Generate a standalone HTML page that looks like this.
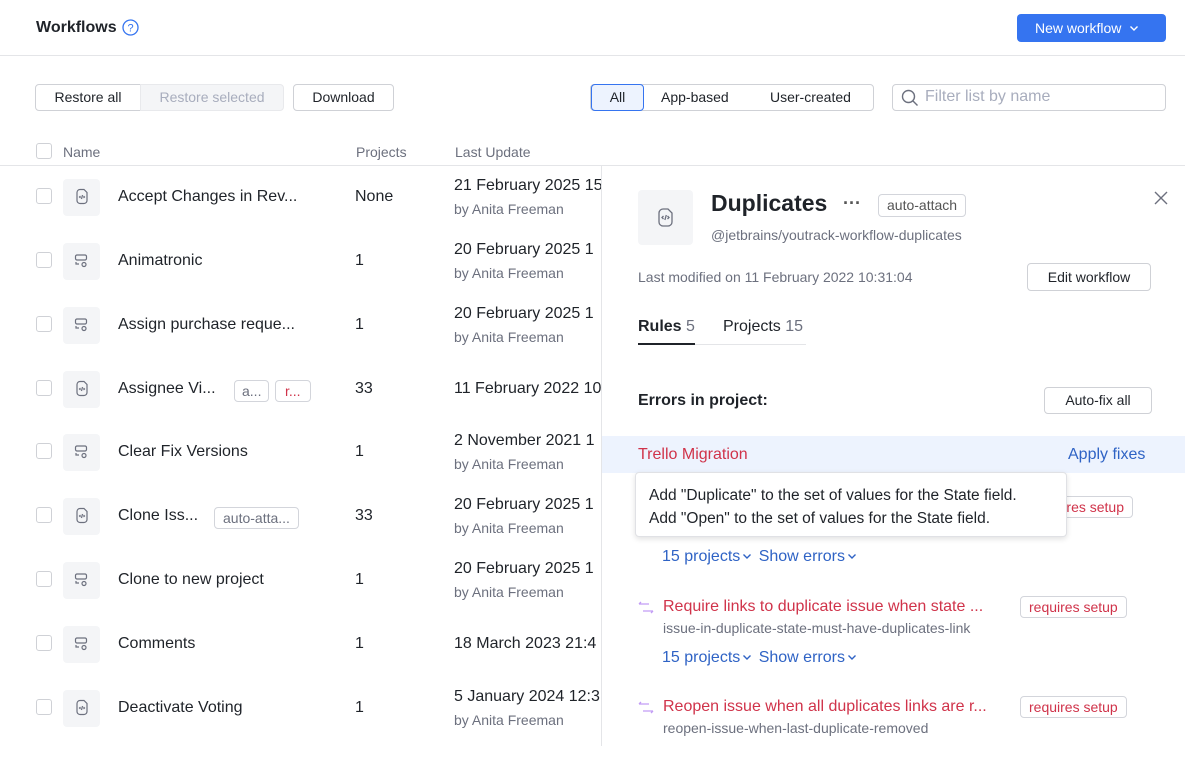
<!DOCTYPE html>
<html><head><style>
*{box-sizing:border-box;margin:0;padding:0}
body{width:1185px;height:746px;overflow:hidden;background:#fff;font-family:"Liberation Sans",sans-serif;color:#1f2329;position:relative;font-size:14px}
.a{position:absolute;white-space:nowrap}
.btn{position:absolute;border:1px solid #cfd1d6;border-radius:4px;background:#fff;font-size:14px;text-align:center;color:#1f2329}
.cb{position:absolute;width:16px;height:16px;border:1px solid #cfd1d6;border-radius:3px;left:36px}
.ic{position:absolute;left:63px;width:37px;height:37px;background:#f4f5f7;border-radius:4px}
.nm{position:absolute;left:118px;font-size:16px}
.pj{position:absolute;left:355px;font-size:16px}
.dt{position:absolute;left:454px;font-size:16px}
.by{position:absolute;left:454px;font-size:14px;color:#6c707e}
.tag{position:absolute;border:1px solid #d3d5db;border-radius:4px;font-size:14px;color:#6c707e;height:22px;line-height:20px;padding:0 8px}
.red{color:#d0334a}
.blue{color:#2f63c5}
.chev{display:inline-block;width:10px;height:8px;margin:0 2px 2px 2px;vertical-align:middle}
</style></head><body>
<div class="a" style="left:36px;top:19px;font-size:16px;font-weight:bold">Workflows</div>
<svg class="a" style="left:122px;top:19px" width="17" height="17" viewBox="0 0 17 17"><circle cx="8.5" cy="8.5" r="7.5" fill="none" stroke="#3574f0" stroke-width="1.3"/><text x="8.5" y="12.5" font-size="11" text-anchor="middle" fill="#3574f0" font-family="Liberation Sans">?</text></svg>
<div class="a" style="left:1017px;top:14px;width:149px;height:28px;background:#3574f0;border-radius:4px;color:#fff;font-size:14px;line-height:28px;padding-left:18px">New workflow <svg class="chev" viewBox="0 0 10 8" style="margin-left:4px"><path d="M1.5 2.5l3.5 3.5 3.5-3.5" fill="none" stroke="#fff" stroke-width="1.4"/></svg></div>
<div class="a" style="left:0;top:55px;width:1185px;height:1px;background:#e4e5e8"></div>

<div class="btn" style="left:35px;top:84px;width:106px;height:27px;line-height:25px;border-radius:4px 0 0 4px">Restore all</div>
<div class="btn" style="left:140px;top:84px;width:144px;height:27px;line-height:25px;border-radius:0 4px 4px 0;background:#f4f5f7;color:#a8adbd;border-color:#e8e9ec">Restore selected</div>
<div class="btn" style="left:293px;top:84px;width:101px;height:27px;line-height:25px">Download</div>

<div class="btn" style="left:590px;top:84px;width:284px;height:27px"></div>
<div class="btn" style="left:591px;top:84px;width:53px;height:27px;line-height:25px;background:#edf3fe;border-color:#3574f0">All</div>
<div class="a" style="left:661px;top:89px">App-based</div>
<div class="a" style="left:770px;top:89px">User-created</div>
<div class="btn" style="left:892px;top:84px;width:274px;height:27px"></div>
<svg class="a" style="left:901px;top:89px" width="18" height="18" viewBox="0 0 18 18"><circle cx="7.5" cy="7.5" r="6" fill="none" stroke="#6c707e" stroke-width="1.4"/><path d="M12 12l4.5 4.5" stroke="#6c707e" stroke-width="1.4"/></svg>
<div class="a" style="left:925px;top:88px;font-size:16px;color:#a8adbd">Filter list by name</div>

<div class="cb" style="top:143px"></div>
<div class="a" style="left:63px;top:144px;color:#6c707e">Name</div>
<div class="a" style="left:356px;top:144px;color:#6c707e">Projects</div>
<div class="a" style="left:455px;top:144px;color:#6c707e">Last Update</div>
<div class="a" style="left:0;top:165px;width:1185px;height:1px;background:#e4e5e8"></div>

<div class="cb" style="top:188px"></div><div class="ic" style="top:179px"></div><div class="nm" style="top:188px">Accept Changes in Rev...</div><div class="pj" style="top:188px">None</div><div class="dt" style="top:177px">21 February 2025 15</div><div class="by" style="top:201px">by Anita Freeman</div>
<div class="cb" style="top:252px"></div><div class="ic" style="top:243px"></div><div class="nm" style="top:252px">Animatronic</div><div class="pj" style="top:252px">1</div><div class="dt" style="top:241px">20 February 2025 1</div><div class="by" style="top:265px">by Anita Freeman</div>
<div class="cb" style="top:316px"></div><div class="ic" style="top:307px"></div><div class="nm" style="top:316px">Assign purchase reque...</div><div class="pj" style="top:316px">1</div><div class="dt" style="top:305px">20 February 2025 1</div><div class="by" style="top:329px">by Anita Freeman</div>
<div class="cb" style="top:380px"></div><div class="ic" style="top:371px"></div><div class="nm" style="top:380px">Assignee Vi...</div><div class="tag" style="left:234px;top:380px;padding:0 7px">a...</div><div class="tag red" style="left:275px;top:380px;padding:0 9px;color:#d0334a">r...</div><div class="pj" style="top:380px">33</div><div class="dt" style="top:380px">11 February 2022 10</div>
<div class="cb" style="top:443px"></div><div class="ic" style="top:434px"></div><div class="nm" style="top:443px">Clear Fix Versions</div><div class="pj" style="top:443px">1</div><div class="dt" style="top:432px">2 November 2021 1</div><div class="by" style="top:456px">by Anita Freeman</div>
<div class="cb" style="top:507px"></div><div class="ic" style="top:498px"></div><div class="nm" style="top:507px">Clone Iss...</div><div class="tag" style="left:214px;top:507px">auto-atta...</div><div class="pj" style="top:507px">33</div><div class="dt" style="top:496px">20 February 2025 1</div><div class="by" style="top:520px">by Anita Freeman</div>
<div class="cb" style="top:571px"></div><div class="ic" style="top:562px"></div><div class="nm" style="top:571px">Clone to new project</div><div class="pj" style="top:571px">1</div><div class="dt" style="top:560px">20 February 2025 1</div><div class="by" style="top:584px">by Anita Freeman</div>
<div class="cb" style="top:635px"></div><div class="ic" style="top:626px"></div><div class="nm" style="top:635px">Comments</div><div class="pj" style="top:635px">1</div><div class="dt" style="top:635px">18 March 2023 21:4</div>
<div class="cb" style="top:699px"></div><div class="ic" style="top:690px"></div><div class="nm" style="top:699px">Deactivate Voting</div><div class="pj" style="top:699px">1</div><div class="dt" style="top:688px">5 January 2024 12:3</div><div class="by" style="top:712px">by Anita Freeman</div>

<svg class="a" style="left:63px;top:179px" width="37" height="600" viewBox="0 0 37 600">
<g fill="none" stroke="#6c707e" stroke-width="1.2">
<g><path d="M14 13.5a3 3 0 0 1 3-3h4l3 3v8a3 3 0 0 1-3 3h-4a3 3 0 0 1-3-3z"/><path d="M17.5 17l-1 1 1 1M20.5 17l1 1-1 1M19.5 16l-1 4"/></g>
<g transform="translate(0,192)"><path d="M14 13.5a3 3 0 0 1 3-3h4l3 3v8a3 3 0 0 1-3 3h-4a3 3 0 0 1-3-3z"/><path d="M17.5 17l-1 1 1 1M20.5 17l1 1-1 1M19.5 16l-1 4"/></g>
<g transform="translate(0,319)"><path d="M14 13.5a3 3 0 0 1 3-3h4l3 3v8a3 3 0 0 1-3 3h-4a3 3 0 0 1-3-3z"/><path d="M17.5 17l-1 1 1 1M20.5 17l1 1-1 1M19.5 16l-1 4"/></g>
<g transform="translate(0,511)"><path d="M14 13.5a3 3 0 0 1 3-3h4l3 3v8a3 3 0 0 1-3 3h-4a3 3 0 0 1-3-3z"/><path d="M17.5 17l-1 1 1 1M20.5 17l1 1-1 1M19.5 16l-1 4"/></g>
<g transform="translate(0,64)"><rect x="12.5" y="12" width="11" height="5" rx="1.5"/><path d="M13 19v2h3"/><circle cx="21" cy="21.5" r="2"/></g>
<g transform="translate(0,128)"><rect x="12.5" y="12" width="11" height="5" rx="1.5"/><path d="M13 19v2h3"/><circle cx="21" cy="21.5" r="2"/></g>
<g transform="translate(0,255)"><rect x="12.5" y="12" width="11" height="5" rx="1.5"/><path d="M13 19v2h3"/><circle cx="21" cy="21.5" r="2"/></g>
<g transform="translate(0,383)"><rect x="12.5" y="12" width="11" height="5" rx="1.5"/><path d="M13 19v2h3"/><circle cx="21" cy="21.5" r="2"/></g>
<g transform="translate(0,447)"><rect x="12.5" y="12" width="11" height="5" rx="1.5"/><path d="M13 19v2h3"/><circle cx="21" cy="21.5" r="2"/></g>
</g></svg>

<div class="a" style="left:601px;top:166px;width:584px;height:580px;background:#fff;border-left:1px solid #e4e5e8"></div>
<div class="a" style="left:638px;top:190px;width:55px;height:55px;background:#f4f5f7;border-radius:4px"></div>
<svg class="a" style="left:638px;top:190px" width="55" height="55" viewBox="0 0 55 55"><g fill="none" stroke="#6c707e" stroke-width="1.3"><path d="M21 23a4 4 0 0 1 4-4h5l4 4v9a4 4 0 0 1-4 4h-5a4 4 0 0 1-4-4z"/><path d="M25.5 26l-1.5 1.5 1.5 1.5M29.5 26l1.5 1.5-1.5 1.5M28.3 25l-1.4 5"/></g></svg>
<div class="a" style="left:711px;top:190px;font-size:23px;font-weight:bold">Duplicates</div>
<div class="a" style="left:843px;top:193px;font-size:18px;font-weight:bold;color:#555">···</div>
<div class="tag" style="left:878px;top:194px;height:23px;line-height:21px;color:#555">auto-attach</div>
<div class="a" style="left:711px;top:227px;color:#6c707e">@jetbrains/youtrack-workflow-duplicates</div>
<svg class="a" style="left:1153px;top:190px" width="16" height="16"><path d="M2 2l12 12M14 2L2 14" stroke="#6c707e" stroke-width="1.4"/></svg>
<div class="a" style="left:638px;top:269px;color:#6c707e">Last modified on 11 February 2022 10:31:04</div>
<div class="btn" style="left:1027px;top:263px;width:124px;height:28px;line-height:26px">Edit workflow</div>
<div class="a" style="left:638px;top:318px;font-size:16px"><b style="font-weight:600">Rules</b> <span style="color:#6c707e">5</span></div>
<div class="a" style="left:723px;top:318px;font-size:16px">Projects <span style="color:#6c707e">15</span></div>
<div class="a" style="left:638px;top:344px;width:168px;height:1px;background:#e4e5e8"></div>
<div class="a" style="left:638px;top:343px;width:57px;height:2px;background:#1f2329"></div>
<div class="a" style="left:638px;top:392px;font-size:16px;font-weight:bold">Errors in project:</div>
<div class="btn" style="left:1044px;top:387px;width:108px;height:27px;line-height:25px">Auto-fix all</div>
<div class="a" style="left:602px;top:436px;width:583px;height:37px;background:#edf3fe"></div>
<div class="a red" style="left:638px;top:446px;font-size:16px">Trello Migration</div>
<div class="a blue" style="left:1068px;top:446px;font-size:16px">Apply fixes</div>
<div class="tag red" style="left:1016px;top:496px;width:117px;color:#d0334a;font-size:14px;text-align:right">requires setup</div>
<div class="a" style="left:635px;top:472px;width:432px;height:65px;background:#fff;border:1px solid #e0e1e5;border-radius:4px;box-shadow:0 2px 6px rgba(0,0,0,.12);padding:11px 0 0 13px;font-size:15.5px;line-height:23px">Add "Duplicate" to the set of values for the State field.<br>Add "Open" to the set of values for the State field.</div>
<div class="a blue" style="left:662px;top:548px;font-size:16px">15 projects<svg class="chev" viewBox="0 0 10 8"><path d="M1.5 2.5l3.5 3.5 3.5-3.5" fill="none" stroke="#2f63c5" stroke-width="1.4"/></svg> Show errors<svg class="chev" viewBox="0 0 10 8"><path d="M1.5 2.5l3.5 3.5 3.5-3.5" fill="none" stroke="#2f63c5" stroke-width="1.4"/></svg></div>

<svg class="a" style="left:637px;top:600px" width="18" height="16"><g fill="none" stroke="#c29cf5" stroke-width="1.3"><path d="M2 4h10M2 4l2-2M16 11H6M16 11l-2 2"/></g></svg>
<div class="a red" style="left:663px;top:598px;font-size:16px">Require links to duplicate issue when state ...</div>
<div class="a" style="left:663px;top:620px;color:#6c707e">issue-in-duplicate-state-must-have-duplicates-link</div>
<div class="tag red" style="left:1020px;top:596px;color:#d0334a">requires setup</div>
<div class="a blue" style="left:662px;top:649px;font-size:16px">15 projects<svg class="chev" viewBox="0 0 10 8"><path d="M1.5 2.5l3.5 3.5 3.5-3.5" fill="none" stroke="#2f63c5" stroke-width="1.4"/></svg> Show errors<svg class="chev" viewBox="0 0 10 8"><path d="M1.5 2.5l3.5 3.5 3.5-3.5" fill="none" stroke="#2f63c5" stroke-width="1.4"/></svg></div>

<svg class="a" style="left:637px;top:700px" width="18" height="16"><g fill="none" stroke="#c29cf5" stroke-width="1.3"><path d="M2 4h10M2 4l2-2M16 11H6M16 11l-2 2"/></g></svg>
<div class="a red" style="left:663px;top:698px;font-size:16px">Reopen issue when all duplicates links are r...</div>
<div class="a" style="left:663px;top:720px;color:#6c707e">reopen-issue-when-last-duplicate-removed</div>
<div class="tag red" style="left:1020px;top:696px;color:#d0334a">requires setup</div>
</body></html>
